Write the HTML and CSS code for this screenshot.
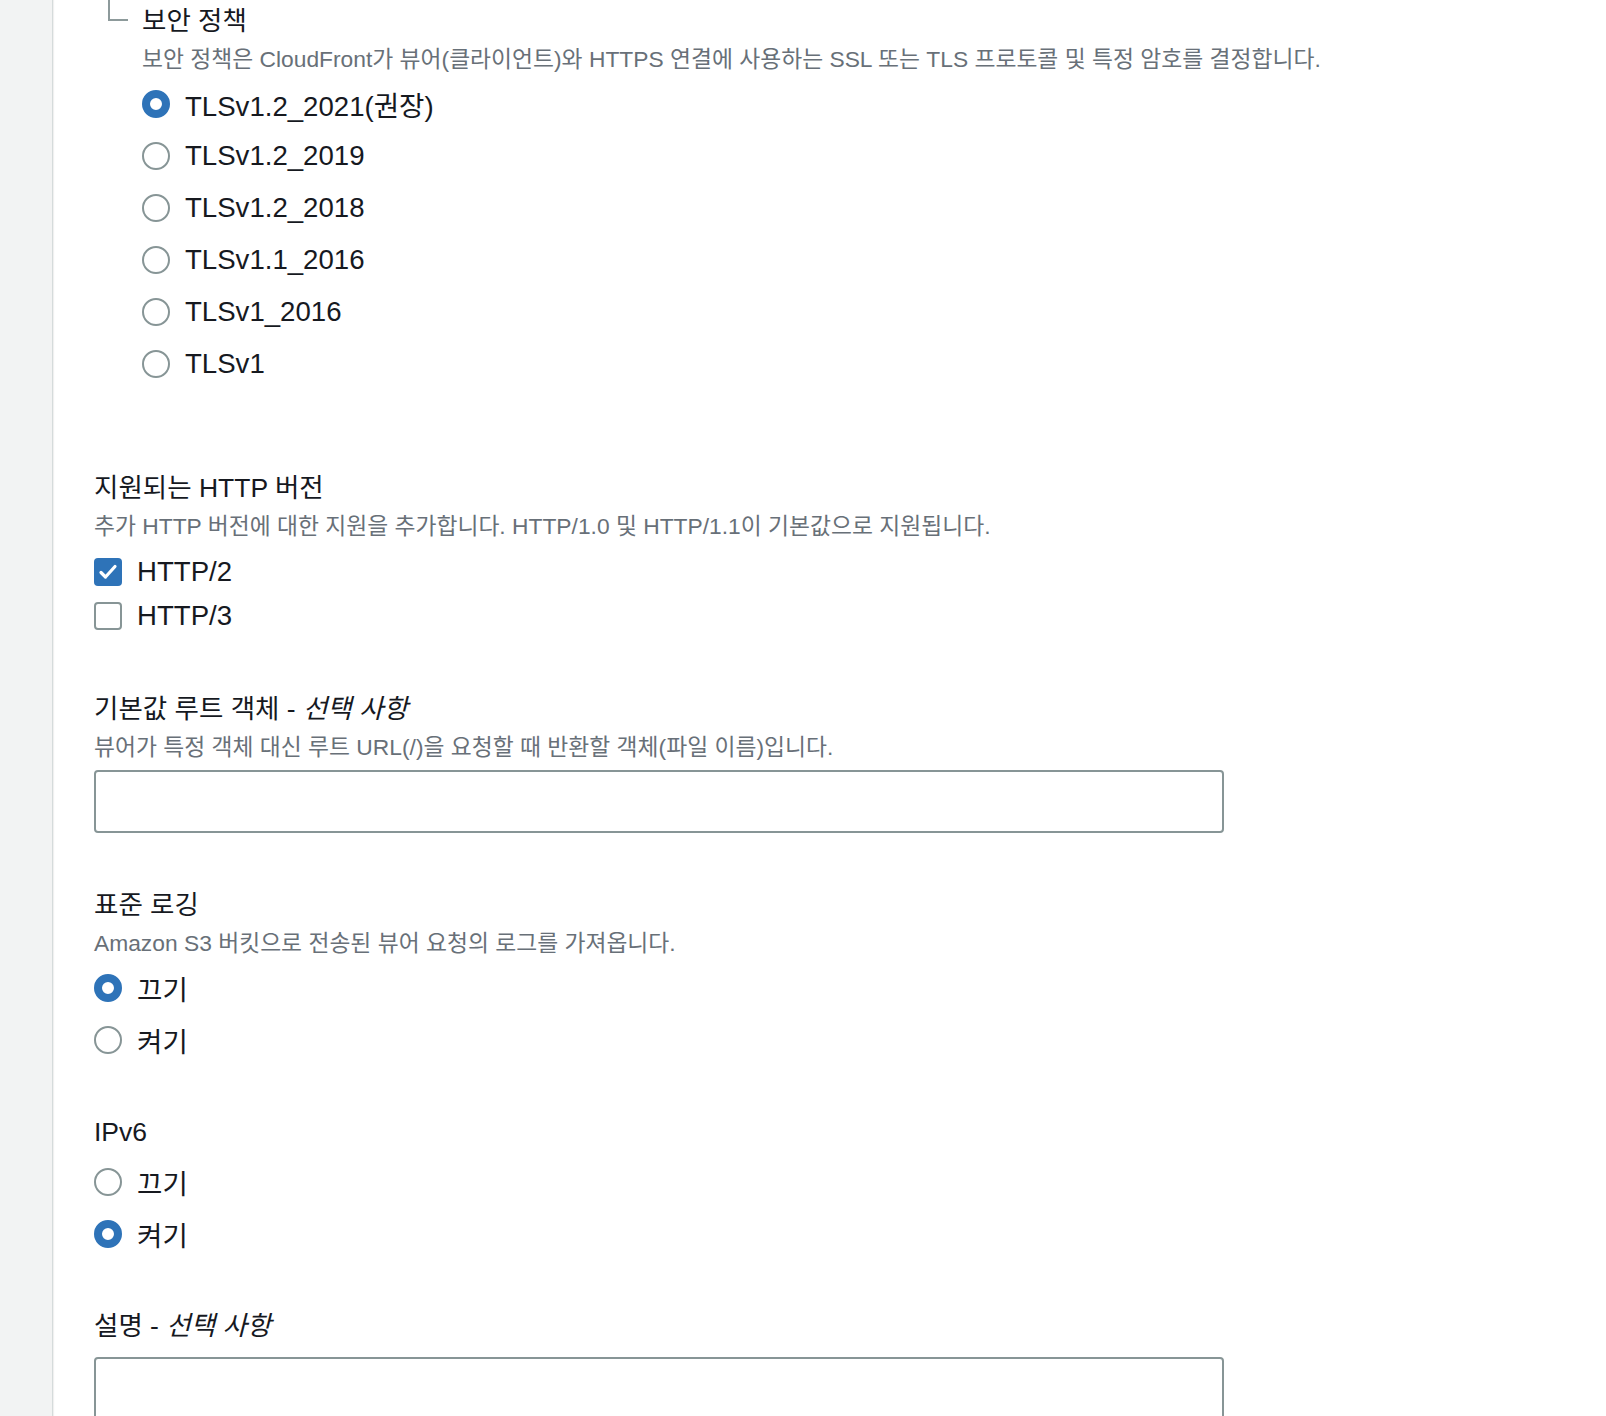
FILE: index.html
```html
<!DOCTYPE html>
<html lang="ko">
<head>
  <meta charset="UTF-8">
  <meta name="viewport" content="width=device-width, initial-scale=1">
  <title>배포 설정</title>
  <link rel="stylesheet" href="styles.css">
</head>
<body>

  <aside class="sidebar"></aside>

  <main class="content">
    <div class="form">

      <!-- 보안 정책 (사용자 지정 SSL 하위 항목) -->
      <div class="field sub-field">
        <div class="field-label">보안 정책</div>
        <div class="field-desc">보안 정책은 CloudFront가 뷰어(클라이언트)와 HTTPS 연결에 사용하는 SSL 또는 TLS 프로토콜 및 특정 암호를 결정합니다.</div>
        <div class="radio-group">
          <label class="radio"><span class="radio-mark checked"></span><span class="option-text">TLSv1.2_2021(권장)</span></label>
          <label class="radio"><span class="radio-mark"></span><span class="option-text">TLSv1.2_2019</span></label>
          <label class="radio"><span class="radio-mark"></span><span class="option-text">TLSv1.2_2018</span></label>
          <label class="radio"><span class="radio-mark"></span><span class="option-text">TLSv1.1_2016</span></label>
          <label class="radio"><span class="radio-mark"></span><span class="option-text">TLSv1_2016</span></label>
          <label class="radio"><span class="radio-mark"></span><span class="option-text">TLSv1</span></label>
        </div>
      </div>

      <!-- HTTP 버전 -->
      <div class="field">
        <div class="field-label">지원되는 HTTP 버전</div>
        <div class="field-desc">추가 HTTP 버전에 대한 지원을 추가합니다. HTTP/1.0 및 HTTP/1.1이 기본값으로 지원됩니다.</div>
        <div class="checkbox-group">
          <label class="checkbox">
            <span class="checkbox-mark checked">
              <svg width="28" height="28" viewBox="0 0 28 28"><polyline points="7,14.5 11.5,19 21,8.5" fill="none" stroke="#fff" stroke-width="3.2" stroke-linecap="round" stroke-linejoin="round"/></svg>
            </span>
            <span class="option-text">HTTP/2</span>
          </label>
          <label class="checkbox">
            <span class="checkbox-mark"></span>
            <span class="option-text">HTTP/3</span>
          </label>
        </div>
      </div>

      <!-- 기본값 루트 객체 -->
      <div class="field">
        <div class="field-label">기본값 루트 객체 - <i>선택 사항</i></div>
        <div class="field-desc">뷰어가 특정 객체 대신 루트 URL(/)을 요청할 때 반환할 객체(파일 이름)입니다.</div>
        <input type="text" class="text-input">
      </div>

      <!-- 표준 로깅 -->
      <div class="field radio-field">
        <div class="field-label">표준 로깅</div>
        <div class="field-desc">Amazon S3 버킷으로 전송된 뷰어 요청의 로그를 가져옵니다.</div>
        <div class="radio-group">
          <label class="radio"><span class="radio-mark checked"></span><span class="option-text">끄기</span></label>
          <label class="radio"><span class="radio-mark"></span><span class="option-text">켜기</span></label>
        </div>
      </div>

      <!-- IPv6 -->
      <div class="field radio-field">
        <div class="field-label">IPv6</div>
        <div class="radio-group">
          <label class="radio"><span class="radio-mark"></span><span class="option-text">끄기</span></label>
          <label class="radio"><span class="radio-mark checked"></span><span class="option-text">켜기</span></label>
        </div>
      </div>

      <!-- 설명 -->
      <div class="field">
        <div class="field-label">설명 - <i>선택 사항</i></div>
        <textarea class="text-input text-area"></textarea>
      </div>

    </div>
  </main>

</body>
</html>
```

FILE: styles.css
```css
html, body {
  height: 100%;
}
body {
  margin: 0;
  display: flex;
  overflow: hidden;
  background-color: white;
  font-family: "Liberation Sans", "Noto Sans CJK KR", sans-serif;
  color: #16191f;
}
.sidebar {
  width: 52px;
  flex-shrink: 0;
  background-color: #f2f3f3;
  border-right: 1px solid #d5dbdb;
  box-shadow: 1px 0 1px rgba(0, 0, 0, 0.06);
}
.content {
  flex: 1;
  padding-left: 41px;
}
.field {
  display: flex;
  flex-direction: column;
  align-items: flex-start;
  margin-bottom: 46px;
}
.radio-field {
  margin-bottom: 47px;
}
.sub-field {
  position: relative;
  padding-top: 2px;
  padding-left: 48px;
  padding-bottom: 33px;
}
.sub-field::before {
  content: "";
  position: absolute;
  left: 14px;
  top: -10px;
  width: 18px;
  height: 29px;
  border-left: 2px solid #8d9a9b;
  border-bottom: 2px solid #8d9a9b;
}
.field-label {
  font-size: 26.5px;
  line-height: 38px;
  color: #16191f;
}
.field-desc {
  font-size: 22.8px;
  line-height: 38px;
  color: #687078;
  white-space: nowrap;
}
.option-text {
  font-size: 27.6px;
  color: #16191f;
}
.radio,
.checkbox {
  display: flex;
  align-items: center;
  gap: 15px;
}
.radio {
  height: 52px;
}
.field-label + .radio-group {
  margin-top: 5px;
}
.radio-mark {
  width: 28px;
  height: 28px;
  box-sizing: border-box;
  border: 2px solid #879596;
  border-radius: 50%;
  background-color: white;
}
.radio-mark.checked {
  border: 8px solid #2e73b8;
}
.checkbox-group {
  margin-top: 5px;
  margin-bottom: 6px;
}
.checkbox {
  height: 44px;
}
.checkbox-mark {
  width: 28px;
  height: 28px;
  box-sizing: border-box;
  border: 2px solid #879596;
  border-radius: 4px;
  background-color: white;
}
.checkbox-mark.checked {
  border: none;
  background-color: #2e73b8;
}
.checkbox-mark svg {
  display: block;
}
.text-input {
  display: block;
  width: 1130px;
  height: 63px;
  box-sizing: border-box;
  margin: 4px 0 7px;
  border: 2px solid #879596;
  border-radius: 4px;
  background-color: white;
  font-family: inherit;
}
.field-label + .text-input {
  margin-top: 12px;
}
.text-area {
  height: 120px;
  resize: none;
}
```
